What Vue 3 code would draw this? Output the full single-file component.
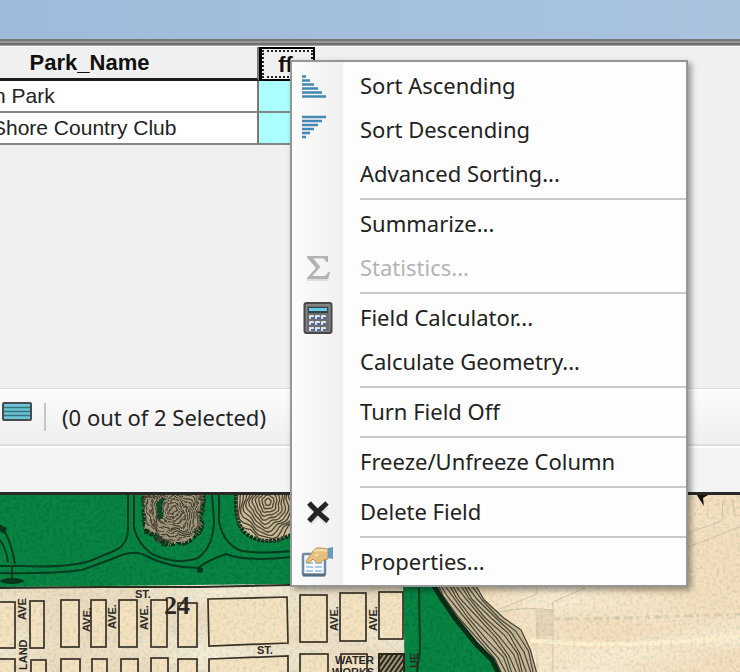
<script setup>
const menu = [
  { label: 'Sort Ascending', icon: 'asc' },
  { label: 'Sort Descending', icon: 'desc' },
  { label: 'Advanced Sorting...' },
  { sep: true },
  { label: 'Summarize...' },
  { label: 'Statistics...', icon: 'sigma', disabled: true },
  { sep: true },
  { label: 'Field Calculator...', icon: 'calc' },
  { label: 'Calculate Geometry...' },
  { sep: true },
  { label: 'Turn Field Off' },
  { sep: true },
  { label: 'Freeze/Unfreeze Column' },
  { sep: true },
  { label: 'Delete Field', icon: 'delete' },
  { sep: true },
  { label: 'Properties...', icon: 'props' },
]

// City blocks: x, y, width, height
const blocks = [
  [-4, 602, 19, 46], [30, 601, 14, 47], [61, 600, 18, 47], [91, 600, 15, 47],
  [119, 600, 18, 47], [151, 600, 16, 47], [178, 603, 19, 44],
  [-4, 659, 19, 30], [31, 660, 15, 30], [61, 659, 19, 30], [92, 659, 15, 30],
  [121, 659, 17, 30], [151, 658, 17, 30], [178, 659, 19, 30],
  [300, 595, 27, 47], [340, 593, 26, 48], [379, 592, 24, 47],
  [300, 654, 28, 30], [341, 654, 26, 30],
]

// Contour lines of the shore, interpolated between its two edges
const inner = [[433, 584], [440, 596], [455, 618], [476, 644], [492, 660], [500, 676]]
const outer = [[474, 584], [485, 600], [504, 618], [520, 630], [531, 650], [538, 676]]
const shore = Array.from({ length: 12 }, (_, i) => {
  const t = i / 11
  return 'M' + inner.map((p, k) => {
    const w = Math.sin(i * 1.9 + k * 2) * 1
    return `${(p[0] + (outer[k][0] - p[0]) * t + w).toFixed(1)} ${(p[1] + (outer[k][1] - p[1]) * t).toFixed(1)}`
  }).join(' L')
})

// Wobbling rings of a hill
function rings(cx, cy, rx, ry, n, seed) {
  return Array.from({ length: n }, (_, i) => {
    const s = (i + 1) / n
    const pts = []
    for (let a = 0; a < 40; a++) {
      const th = (a / 40) * Math.PI * 2
      const w = 1 + 0.07 * Math.sin(th * 5 + seed + i * 0.4) + 0.04 * Math.sin(th * 9 + i)
      pts.push(`${(cx + Math.cos(th) * rx * s * w).toFixed(1)} ${(cy + Math.sin(th) * ry * s * w).toFixed(1)}`)
    }
    return 'M' + pts.join(' L') + 'Z'
  })
}
const hillA = rings(173, 510, 28, 31, 9, 1)
const hillB = rings(268, 502, 32, 38, 11, 3)
</script>

<template>
  <div class="app">
    <header class="titlebar"></header>
    <div class="edge"></div>

    <main class="grid">
      <table>
        <thead>
          <tr><th class="name">Park_Name</th><th class="sel"><span>ff</span></th></tr>
        </thead>
        <tbody>
          <tr><td class="first">n Park</td><td class="hl"></td></tr>
          <tr><td class="second">Shore Country Club</td><td class="hl"></td></tr>
        </tbody>
      </table>
    </main>

    <div class="toolbar">
      <button class="tool" aria-label="Show selected records">
        <svg width="30" height="20" viewBox="0 0 30 20">
          <rect x="1" y="1" width="28" height="17" rx="1" fill="#6cc5d3" stroke="#454b4e" stroke-width="2" />
          <path d="M2 5.500H28M2 9.500H28M2 13.500H28" stroke="#35727e" stroke-width="1.300" />
        </svg>
      </button>
      <span class="divider"></span>
      <span class="status">(0 out of 2 Selected)</span>
    </div>
    <div class="strip"></div>

    <section class="map">
      <svg viewBox="0 495 740 177" preserveAspectRatio="xMinYMin slice">
        <defs>
          <filter id="grain" x="0" y="0" width="100%" height="100%">
            <feTurbulence type="fractalNoise" baseFrequency="0.300" numOctaves="2" seed="4" />
            <feColorMatrix values="0 0 0 0 0  0 0 0 0 0.150  0 0 0 0 0.060  3 0 0 0 -1.300" result="n" />
            <feComposite in="n" in2="SourceGraphic" operator="in" />
          </filter>
          <filter id="stain" x="0" y="0" width="100%" height="100%">
            <feTurbulence type="fractalNoise" baseFrequency="0.006 0.030" numOctaves="2" seed="9" />
            <feColorMatrix values="0 0 0 0 1  0 0 0 0 0.950  0 0 0 0 0.830  0 2 0 0 -0.800" />
          </filter>
          <filter id="rough" x="-5%" y="-5%" width="110%" height="110%">
            <feTurbulence type="fractalNoise" baseFrequency="0.100" numOctaves="2" seed="3" />
            <feDisplacementMap in="SourceGraphic" scale="9" xChannelSelector="R" yChannelSelector="G" />
          </filter>
          <pattern id="hatch" width="4" height="4" patternUnits="userSpaceOnUse" patternTransform="rotate(35)">
            <rect width="4" height="4" fill="#a59678" /><rect width="2" height="4" fill="#2b241b" />
          </pattern>
        </defs>
        <rect x="0" y="495" width="740" height="177" fill="#f5dfbe" />
        <rect x="0" y="586" width="404" height="86" fill="#ecdcc1" />
        <rect x="0" y="495" width="740" height="177" filter="url(#stain)" opacity="0.700" />

        <g fill="none" stroke="#cfc5a6" stroke-width="1">
          <path d="M688 533L722 521L723 500M688 547L740 527M732 498L735 516L740 515" />
          <path d="M500 609L537 594V588M553 672V602L585 588M495 613Q520 606 552 610" />
          <path d="M537 672V610" opacity="0.600" />
          <path d="M555 619Q640 618 740 614" stroke-width="3" stroke-dasharray="5 4 9 3 3 6" opacity="0.600" />
          <path d="M530 640Q620 650 740 636" stroke="#fff1cf" stroke-width="4" />
          <path d="M536 610h16v26h-16z" fill="#b9b094" opacity="0.250" />
        </g>
        <path d="M697 495h11l-5 3 1 8-4-6z" fill="#15110c" />

        <g fill="#0a8541">
          <path d="M0 495H404V583L290 584L100 586L0 587Z" />
          <path d="M403 584H433L440 596L455 618L476 644L492 660L500 676H405Z" />
        </g>
        <g filter="url(#grain)" opacity="0.600">
          <path d="M0 495H404V583L290 584L100 586L0 587Z" />
          <path d="M403 584H433L440 596L455 618L476 644L492 660L500 676H405Z" />
        </g>

        <g filter="url(#rough)">
          <path d="M145 485Q141 520 148 532Q160 545 178 543Q196 543 201 528L203 485Z" fill="#a3967c" stroke="#0b3017" stroke-width="4" stroke-dasharray="3 1" />
          <g fill="none" stroke="#4a4134" stroke-width="1.300">
            <path v-for="(d, i) in hillA" :key="'a' + i" :d="d" />
          </g>
          <path d="M157 500q-4 12 3 20q5-6 3-20z" fill="#0b4a27" />
        </g>
        <path d="M237 485Q233 520 244 532Q258 544 278 540L300 532V485Z" fill="#cdbb99" stroke="#0b3017" stroke-width="4" stroke-dasharray="3 1" />
        <g fill="none" stroke="#4a4134" stroke-width="1.300">
          <path v-for="(d, i) in hillB" :key="'b' + i" :d="d" />
        </g>

        <g fill="none" stroke="#053b1c" stroke-width="2">
          <path d="M0 566H20Q68 568 90 561L116 550Q128 544 128 528V495" />
          <path d="M0 573Q50 574 82 570L112 559Q134 548 146 556Q170 568 198 568Q208 560 226 554Q246 562 292 557" />
          <path d="M134 495V528Q138 544 152 554Q178 566 198 558Q214 546 214 520L212 495" />
          <path d="M219 495V522Q224 545 242 551Q262 554 292 551" />
          <path d="M0 525Q10 536 15 564M0 540Q6 548 8 562M12 566V578" />
          <path d="M419 588L420 650L417 672" />
        </g>
        <ellipse cx="12" cy="581" rx="12" ry="3" fill="#06351a" />
        <circle cx="200" cy="570" r="3" fill="#06351a" />
        <path d="M0 525l7 3-3 6-4-3z" fill="#06351a" />

        <path d="M433 584L474 584L485 600L504 618L520 630L531 650L538 676H500L492 660L476 644L455 618L440 596Z" fill="#c9b897" />
        <path v-for="(d, i) in shore" :key="'s' + i" :d="d" fill="none" stroke="#4a4236" stroke-width="1.200" />
        <path d="M433 584L440 596L455 618L476 644L492 660L500 676" fill="none" stroke="#0a2b16" stroke-width="5" />

        <path d="M0 588L100 587L200 587L290 585" fill="none" stroke="#2c2920" stroke-width="2" />

        <g fill="#f6e2c0" stroke="#3a3026" stroke-width="1.700">
          <rect v-for="(b, i) in blocks" :key="i" :x="b[0]" :y="b[1]" :width="b[2]" :height="b[3]" />
          <path d="M208 599L287 597L288 643L209 646ZM209 659L288 656V680H209Z" />
        </g>
        <rect x="379" y="654" width="25" height="24" fill="url(#hatch)" stroke="#2d241b" stroke-width="2" />

        <g class="label">
          <text transform="translate(26 620) rotate(-90)">AVE</text>
          <text transform="translate(27 670) rotate(-90)">LAND</text>
          <text transform="translate(90 632) rotate(-88)">AVE.</text>
          <text transform="translate(116 629) rotate(-90)">AVE.</text>
          <text transform="translate(148 630) rotate(-90)">AVE.</text>
          <text transform="translate(338 631) rotate(-90)">AVE.</text>
          <text transform="translate(377 631) rotate(-90)">AVE.</text>
          <text transform="translate(418 668) rotate(-90)">UE</text>
          <text x="135" y="598">ST.</text>
          <text x="257" y="654">ST.</text>
          <text x="335" y="664">WATER</text>
          <text x="332" y="676">WORKS</text>
          <text x="164" y="614" class="number">24</text>
        </g>
        <rect x="0" y="495" width="740" height="177" filter="url(#grain)" opacity="0.100" />
      </svg>
    </section>

    <div class="menu" role="menu">
      <template v-for="(m, i) in menu" :key="i">
        <hr v-if="m.sep">
        <button v-else role="menuitem" class="item" :disabled="m.disabled">
          <span class="icon">
            <svg v-if="m.icon === 'asc'" width="32" height="32" viewBox="0 0 32 32">
              <path d="M1 6.500h4M1 10.500h8M1 14.500h12M1 18.500h16M1 22.500h20M1 26.500h24" stroke="#4489b4" stroke-width="2.500" />
            </svg>
            <svg v-else-if="m.icon === 'desc'" width="32" height="32" viewBox="0 0 32 32">
              <path d="M1 3h24M1 7h20M1 11h16M1 15h12M1 19h8M1 23h4" stroke="#4489b4" stroke-width="2.500" />
            </svg>
            <svg v-else-if="m.icon === 'sigma'" width="32" height="32" viewBox="0 0 32 32">
              <path d="M6 4H27V10H25Q24 7 21 7H13L20 15L12 24H22Q26 24 27 20H29L27 29H6V27L15 16L6 6Z" fill="#dedede" />
              <path d="M6 4H27V10H25Q24 6 21 6H12L19 15L11 24H22Q26 24 27 20H29L27 27H6V26L15 16L6 5Z" fill="#b2b2b2" />
            </svg>
            <svg v-else-if="m.icon === 'calc'" width="32" height="34" viewBox="0 0 32 34">
              <rect x="3.500" y="2" width="27" height="30" rx="2" fill="#858585" stroke="#484848" stroke-width="2" />
              <rect x="6" y="5" width="22" height="25" fill="#6c6c6c" />
              <rect x="7" y="6" width="20" height="6" fill="#314651" />
              <rect x="8" y="7" width="18" height="3" fill="#64cbe2" />
              <g v-for="r in 3" :key="r">
                <g v-for="c in 3" :key="c">
                  <rect :x="2 + c * 6" :y="8 + r * 6" width="5" height="4" rx="1" fill="#dce4f4" />
                  <rect :x="4 + c * 6" :y="10 + r * 6" width="3" height="2" fill="#506bad" />
                </g>
              </g>
            </svg>
            <svg v-else-if="m.icon === 'delete'" width="32" height="32" viewBox="0 0 32 32">
              <path d="M9 10L26 27M26 10L9 27" stroke="#dcdcdc" stroke-width="5" />
              <path d="M8 7Q15 15 27 25M26 7Q17 15 8 25" fill="none" stroke="#242424" stroke-width="5" />
            </svg>
            <svg v-else-if="m.icon === 'props'" width="34" height="34" viewBox="0 0 34 34">
              <rect x="2" y="9" width="22" height="21" rx="1" fill="#f5fbff" stroke="#6e899d" stroke-width="2.500" />
              <path d="M2 30H24" stroke="#576e80" stroke-width="3" />
              <path d="M5 18h7M14 18h7M5 22h7M14 22h7M5 26h7M14 26h7" stroke="#a9cde5" stroke-width="2" />
              <path d="M5 16L13 5Q15 2 20 3L27 4V14L22 15Q19 20 15 17L12 14L8 18Q5 18 5 16Z" fill="#e5c07d" stroke="#b8965c" />
              <path d="M13 6Q19 4 26 6M14 11L17 9" fill="none" stroke="#fae2ac" stroke-width="2" />
              <path d="M27 3L32 2V14L27 13Z" fill="#6c9abd" />
            </svg>
          </span>
          <span class="text">{{ m.label }}</span>
        </button>
      </template>
    </div>
  </div>
</template>

<style>
body { background: #f0f0f0; }
</style>

<style scoped>
.app {
  position: relative;
  display: flex;
  flex-direction: column;
  min-height: 100vh;
  overflow: hidden;
  font-family: "Noto Sans", "Open Sans", sans-serif;
  color: #222;
  background: #f0f0f0;
}
.titlebar { height: 39px; background: linear-gradient(90deg, #9fbbdb, #a9c3df); }
.edge {
  height: 8px;
  background: linear-gradient(#777 0 2px, #979797 2px 4px, #707070 4px 6px, #a0a0a0 6px 7px, #fff 7px);
}
.grid { height: 342px; border-bottom: 1px solid #ddd; box-sizing: border-box; }
table {
  border-collapse: separate;
  border-spacing: 0;
  table-layout: fixed;
  width: 315px;
  font: 21px/30px "Liberation Sans", Arial, sans-serif;
}
th, td { box-sizing: border-box; padding: 0; height: 32px; white-space: nowrap; text-align: left; }
th { height: 34px; border-bottom: 3px solid #1c1c1c; background: #f0f0f0; text-align: center; color: #111; font-size: 22px; }
.name { width: 259px; padding-right: 78px; }
.name, .first, .second { border-right: 2px solid #777; }
td { background: #fff; border-bottom: 2px solid #858585; }
.first { text-indent: -6px; }
.second { text-indent: -8px; }
td.hl { background: #abffff; border-right: 2px solid #858585; }
.sel { padding: 0; border: 2px solid #000; border-left-width: 3px; }
.sel span { display: block; height: 28px; padding-right: 4px; line-height: 25px; border: 2px dotted #222; box-sizing: border-box; font-size: 22px; }
.toolbar {
  display: flex;
  align-items: center;
  height: 57px;
  box-sizing: border-box;
  padding: 0 2px;
  border-top: 1px solid #fff;
  border-bottom: 2px solid #ddd;
  background: linear-gradient(#fcfcfc, #eee);
}
.tool { display: flex; padding: 0 0 10px; border: 0; background: none; }
.divider { width: 2px; height: 28px; margin: 0 16px 0 12px; background: #c6c6c6; }
.status { font-size: 22px; line-height: 30px; white-space: nowrap; }
.strip {
  height: 49px;
  box-sizing: border-box;
  border-top: 2px solid #fdfdfd;
  border-bottom: 3px solid #292929;
  background: #f3f3f3;
}
.map { flex: 1; min-height: 177px; display: flex; }
.map svg { display: block; width: 100%; height: auto; }
.label { font: bold 11px "Liberation Sans", Arial, sans-serif; fill: #2f271f; }
.number { font: bold 26px "Liberation Serif", serif; }
.menu {
  position: absolute;
  left: 290px;
  top: 60px;
  min-width: 398px;
  box-sizing: border-box;
  padding: 2px 0 1px;
  border: 2px solid #969696;
  background: linear-gradient(90deg, #fcfcfc, #f0f0f0 50px, #fdfdfd 52px);
  box-shadow: 3px 3px 6px rgba(0, 0, 0, 0.4);
}
.item {
  display: flex;
  align-items: center;
  width: 100%;
  height: 44px;
  padding: 0;
  border: 0;
  background: none;
  color: #222;
  font: 22px/30px "Noto Sans", "Open Sans", sans-serif;
  text-align: left;
  white-space: nowrap;
}
.item:disabled { color: #b4b4b4; }
.text { padding-bottom: 2px; }
.icon { display: flex; width: 59px; padding-left: 9px; }
hr { height: 2px; margin: 2px 0 2px 68px; border: 0; background: #c9c9c9; }
</style>
